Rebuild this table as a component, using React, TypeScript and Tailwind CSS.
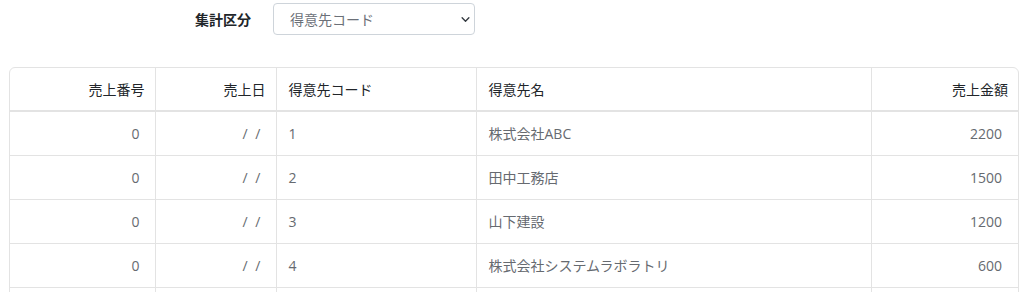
import React from "react";

const rows = [
  { no: "0", date: "/ /", code: "1", name: "株式会社ABC", amount: "2200" },
  { no: "0", date: "/ /", code: "2", name: "田中工務店", amount: "1500" },
  { no: "0", date: "/ /", code: "3", name: "山下建設", amount: "1200" },
  { no: "0", date: "/ /", code: "4", name: "株式会社システムラボラトリ", amount: "600" },
];

export default function App() {
  return (
    <div
      className="w-[1024px] h-[292px] overflow-hidden bg-white"
      style={{ fontFamily: '"Open Sans", "Noto Sans CJK JP", sans-serif' }}
    >
      <div className="flex items-center pt-[3px] h-[35px]">
        <div className="w-[273px] flex justify-end pr-[22px]">
          <span className="text-[14px] font-bold text-[#212529]">集計区分</span>
        </div>
        <div className="w-[202px] h-[32px] border border-[#ced4da] rounded-[4px] flex items-center justify-between pl-[16px] pr-[4px]">
          <span className="text-[14px] text-[#6b7078]">得意先コード</span>
          <svg width="9" height="9" viewBox="0 0 16 16" fill="none">
            <path d="M2 5l6 6 6-6" stroke="#343a40" strokeWidth="2.4" strokeLinecap="round" strokeLinejoin="round" />
          </svg>
        </div>
      </div>
      <div className="mt-[32px] ml-[9px] w-[1010px] border border-[#e3e3e3] rounded-[6px] overflow-hidden">
        <table className="w-full table-fixed border-collapse text-[14px]">
          <colgroup>
            <col className="w-[145px]" />
            <col className="w-[121px]" />
            <col className="w-[200px]" />
            <col className="w-[395px]" />
            <col />
          </colgroup>
          <thead>
            <tr className="h-[43px] border-b-2 border-[#e3e3e3] text-[#212529]">
              <th className="font-normal text-right px-[10px] border-r border-[#e3e3e3]">売上番号</th>
              <th className="font-normal text-right px-[10px] border-r border-[#e3e3e3]">売上日</th>
              <th className="font-normal text-left px-[12px] border-r border-[#e3e3e3]">得意先コード</th>
              <th className="font-normal text-left px-[12px] border-r border-[#e3e3e3]">得意先名</th>
              <th className="font-normal text-right pr-[10px]">売上金額</th>
            </tr>
          </thead>
          <tbody className="text-[#666a70]">
            {rows.map((r, i) => (
              <tr key={i} className="h-[44px] border-b border-[#e3e3e3]">
                <td className="text-right px-[15px] border-r border-[#e3e3e3]">{r.no}</td>
                <td className="text-right pl-[12px] pr-[13px] border-r border-[#e3e3e3] tracking-[2px]">{r.date}</td>
                <td className="text-left px-[12px] border-r border-[#e3e3e3]">{r.code}</td>
                <td className="text-left px-[12px] border-r border-[#e3e3e3]">{r.name}</td>
                <td className="text-right pr-[16px]">{r.amount}</td>
              </tr>
            ))}
            <tr className="h-[44px]">
              <td className="border-r border-[#e3e3e3]"></td>
              <td className="border-r border-[#e3e3e3]"></td>
              <td className="border-r border-[#e3e3e3]"></td>
              <td className="border-r border-[#e3e3e3]"></td>
              <td></td>
            </tr>
          </tbody>
        </table>
      </div>
    </div>
  );
}
